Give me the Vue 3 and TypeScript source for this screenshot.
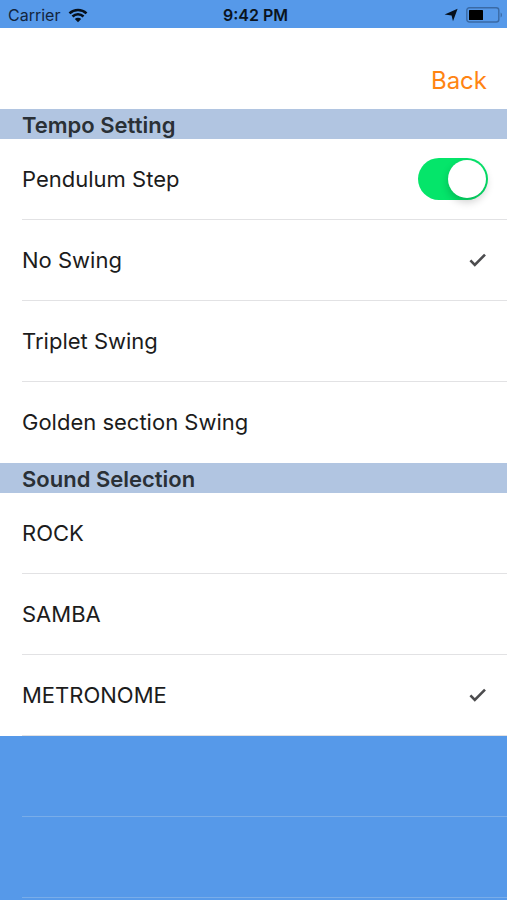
<script setup lang="ts">
import { ref } from 'vue'

interface Choice {
  id: string
  label: string
}

const swings: Choice[] = [
  { id: 'none', label: 'No Swing' },
  { id: 'triplet', label: 'Triplet Swing' },
  { id: 'golden', label: 'Golden section Swing' },
]

const sounds: Choice[] = [
  { id: 'rock', label: 'ROCK' },
  { id: 'samba', label: 'SAMBA' },
  { id: 'metronome', label: 'METRONOME' },
]

const pendulum = ref<boolean>(true)
const swing = ref<string>('none')
const sound = ref<string>('metronome')
</script>

<template>
  <div class="screen">
    <div class="status">
      <div class="status-side">
        <span>Carrier</span>
        <svg class="wifi" viewBox="0 0 20 15" aria-hidden="true">
          <path d="M1.5 5.4a12.4 12.4 0 0 1 17 0" />
          <path d="M4.5 8.5a8 8 0 0 1 11 0" />
          <path class="solid" d="M10 14.2 6.8 11a4.6 4.6 0 0 1 6.4 0z" />
        </svg>
      </div>
      <span class="clock">9:42 PM</span>
      <div class="status-side end">
        <svg class="arrow" viewBox="0 0 14 14" aria-hidden="true">
          <path d="M13.6.8 9 13.2 7.6 7.4.6 6.4z" />
        </svg>
        <svg class="battery" viewBox="0 0 37 16" aria-hidden="true">
          <rect class="case" x="0.8" y="0.8" width="32" height="14.2" rx="2.5" />
          <rect x="3" y="3" width="14" height="10" rx="0.6" />
          <path class="tip" d="M34.6 5.4c1.8.8 1.8 4.2 0 5z" />
        </svg>
      </div>
    </div>

    <header class="nav">
      <button type="button" class="back">Back</button>
    </header>

    <main>
      <section>
        <h2 class="heading">Tempo Setting</h2>
        <div class="rows">
          <label class="row">
            <span>Pendulum Step</span>
            <input v-model="pendulum" class="toggle" type="checkbox" role="switch" />
          </label>
          <label v-for="item in swings" :key="item.id" class="row">
            <span>{{ item.label }}</span>
            <input v-model="swing" class="pick" type="radio" name="swing" :value="item.id" />
            <svg v-if="swing === item.id" class="check" viewBox="0 0 18 16" aria-hidden="true">
              <path d="M1.4 8.4 5.8 13 16 2.6" />
            </svg>
          </label>
        </div>
      </section>

      <section>
        <h2 class="heading">Sound Selection</h2>
        <div class="rows">
          <label v-for="item in sounds" :key="item.id" class="row">
            <span>{{ item.label }}</span>
            <input v-model="sound" class="pick" type="radio" name="sound" :value="item.id" />
            <svg v-if="sound === item.id" class="check" viewBox="0 0 18 16" aria-hidden="true">
              <path d="M1.4 8.4 5.8 13 16 2.6" />
            </svg>
          </label>
        </div>
      </section>

      <div class="blank" aria-hidden="true">
        <div v-for="n in 2" :key="n" class="blank-row"></div>
      </div>
    </main>
  </div>
</template>

<style>
body {
  margin: 0;
  background: #5699e9;
}
</style>

<style scoped>
.screen {
  min-height: 100vh;
  box-sizing: border-box;
  background: #5699e9;
  color: #1c1c1c;
  font-family: Inter, "Liberation Sans", sans-serif;
  font-size: 22px;
  line-height: 30px;
}

.status {
  display: flex;
  align-items: center;
  height: 28px;
  padding: 2px 4px 0 8px;
  box-sizing: border-box;
  color: #12253d;
  font-size: 16px;
  line-height: 24px;
}

.status-side {
  display: flex;
  flex: 1;
  align-items: center;
  gap: 8px;
}

.end {
  justify-content: flex-end;
}

.clock {
  color: #0a1420;
  font-weight: 600;
}

.wifi {
  width: 20px;
  height: 15px;
  fill: none;
  stroke: #06101c;
  stroke-width: 2.6;
}

.wifi .solid {
  fill: #06101c;
  stroke: none;
}

.arrow {
  width: 14px;
  height: 14px;
  fill: #06101c;
}

.battery {
  width: 37px;
  height: 16px;
  fill: #000;
}

.battery .case {
  fill: none;
  stroke: #3a6aa5;
  stroke-width: 1.4;
}

.battery .tip {
  fill: #3a6aa5;
}

.nav {
  display: flex;
  align-items: flex-end;
  justify-content: flex-end;
  height: 81px;
  padding: 0 20px 13px;
  box-sizing: border-box;
  background: #fff;
}

.back {
  padding: 0;
  border: 0;
  background: none;
  color: #ff8412;
  font: inherit;
  font-size: 24px;
  cursor: pointer;
}

.heading {
  margin: 0;
  padding: 1px 22px 0;
  height: 30px;
  box-sizing: border-box;
  background: #b1c5e1;
  color: #2a3036;
  font-size: 22px;
  font-weight: 600;
}

.rows {
  padding-left: 22px;
  background: #fff;
}

.row {
  display: flex;
  position: relative;
  align-items: center;
  justify-content: space-between;
  height: 81px;
  padding-right: 19px;
  box-sizing: border-box;
  border-bottom: 1px solid #e2e2e4;
  cursor: pointer;
}

section:first-child .row:last-child {
  border-bottom-color: transparent;
}

.toggle {
  appearance: none;
  display: flex;
  width: 70px;
  height: 42px;
  margin: 0;
  padding: 2px;
  box-sizing: border-box;
  border-radius: 21px;
  background: #d8d8dc;
  cursor: pointer;
}

.toggle::before {
  content: "";
  width: 38px;
  height: 38px;
  border-radius: 50%;
  background: #fff;
  box-shadow: 0 4px 8px rgba(0, 0, 0, 0.2);
}

.toggle:checked {
  justify-content: flex-end;
  background: #05e56a;
}

.pick {
  appearance: none;
  position: absolute;
  inset: 0;
  margin: 0;
  cursor: pointer;
}

.check {
  width: 18px;
  height: 16px;
  margin-right: 1px;
  fill: none;
  stroke: #4c4c4e;
  stroke-width: 2.6;
}

.blank {
  padding-left: 22px;
}

.blank-row {
  height: 81px;
  box-sizing: border-box;
  border-bottom: 1px solid #79ade9;
}
</style>
